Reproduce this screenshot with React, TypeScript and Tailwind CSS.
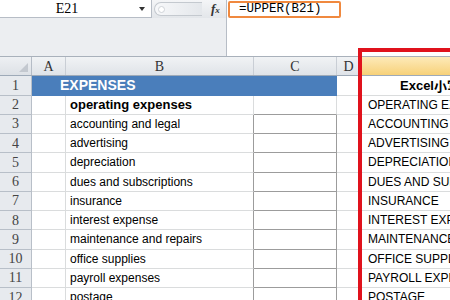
import React from 'react';

type Row = { b: string; e: string; bold?: boolean };

const rows: Row[] = [
  { b: 'operating expenses', e: 'OPERATING EXPENSES', bold: true },
  { b: 'accounting and legal', e: 'ACCOUNTING AND LEGAL' },
  { b: 'advertising', e: 'ADVERTISING' },
  { b: 'depreciation', e: 'DEPRECIATION' },
  { b: 'dues and subscriptions', e: 'DUES AND SUBSCRIPTIONS' },
  { b: 'insurance', e: 'INSURANCE' },
  { b: 'interest expense', e: 'INTEREST EXPENSE' },
  { b: 'maintenance and repairs', e: 'MAINTENANCE AND REPAIRS' },
  { b: 'office supplies', e: 'OFFICE SUPPLIES' },
  { b: 'payroll expenses', e: 'PAYROLL EXPENSES' },
  { b: 'postage', e: 'POSTAGE' },
];

const serif = "font-['Liberation_Serif',serif]";
const sans = "font-['Liberation_Sans',Arial,sans-serif]";

const FormulaBar = () => (
  <div className="flex h-[57px] border-b border-[#a9b1bb]">
    <div className="flex w-[226px] flex-col bg-[#eceef1]">
      <div className="flex h-[18px] items-center bg-gradient-to-b from-[#f4f5f7] to-[#e3e6ea]">
        <div className="flex h-[18px] w-[152px] items-center border-b border-r border-[#b7bdc6] bg-white">
          <span className={`${serif} w-[134px] text-center text-[14px] text-black`}>E21</span>
          <span className="ml-[5px] h-0 w-0 border-x-[3px] border-t-[4px] border-x-transparent border-t-[#333]" />
        </div>
        <div className="ml-[2px] flex h-[14px] w-[48px] items-center rounded-l-full border border-r-0 border-[#c4c9cf] bg-gradient-to-r from-[#f7f8fa] to-[#e4e7eb] pl-[3px]">
          <span className="h-[7px] w-[7px] rounded-full border border-[#cfd3d8] bg-white" />
        </div>
        <span className={`${serif} ml-[9px] text-[13px] font-bold italic text-[#333]`}>
          f<span className="text-[9px]">x</span>
        </span>
      </div>
    </div>
    <div className="flex-1 border-l border-[#b7bdc6] bg-white pt-[1px] pl-[1px]">
      <div className="flex h-[17px] w-[113px] items-center rounded-[2px] border-2 border-[#f0893f] pl-[9px]">
        <span className="font-['Liberation_Mono',monospace] text-[12.5px] leading-none text-black">=UPPER(B21)</span>
      </div>
    </div>
  </div>
);

const HeaderRow = () => (
  <div className={`${serif} flex h-[19.25px] border-b border-[#9eaab8] text-[14px] text-[#333]`}>
    <div className="flex w-[32px] items-end justify-end border-r border-[#b5bcc6] bg-gradient-to-b from-[#eef0f3] to-[#dde1e6] pr-[3px] pb-[3px]">
      <svg width="9" height="9" viewBox="0 0 9 9">
        <polygon points="9,0 9,9 0,9" fill="#c3c8cf" />
      </svg>
    </div>
    {[
      ['A', 'w-[34px]'],
      ['B', 'w-[188px]'],
      ['C', 'w-[83px]'],
      ['D', 'w-[24px]'],
    ].map(([l, w]) => (
      <div key={l} className={`${w} flex items-center justify-center border-r border-[#c9ced5] bg-gradient-to-b from-[#f1f3f5] to-[#dfe3e8]`}>
        {l}
      </div>
    ))}
    <div className="flex-1 bg-gradient-to-b from-[#fdeab8] to-[#f7d178]" />
  </div>
);

const RowNum = ({ n }: { n: number }) => (
  <div className={`${serif} flex w-[32px] items-center justify-center border-r border-b border-[#b8bfc8] bg-[#e7eaee] text-[14px] text-[#444]`}>
    {n}
  </div>
);

export default function App() {
  return (
    <div className="relative h-[300px] w-[450px] overflow-hidden bg-white">
      <FormulaBar />
      <HeaderRow />

      <div className={`${sans} flex h-[19.25px] text-[12px] text-black`}>
        <RowNum n={1} />
        <div className="flex w-[305px] items-center bg-[#4a7ebb] pl-[28px] text-[14px] font-bold text-white">EXPENSES</div>
        <div className="w-[24px] border-r border-b border-[#dadcdd]" />
        <div className="flex flex-1 items-center overflow-hidden border-b border-[#dadcdd] pl-[39px] text-[13px] font-bold whitespace-nowrap">
          Excel<span className="font-['Noto_Sans_CJK_SC',sans-serif] font-bold">小写转大写</span>
        </div>
      </div>

      {rows.map((r, i) => {
        const n = i + 2;
        const boxed = n >= 3;
        return (
          <div key={n} className={`${sans} flex h-[19.25px] text-[12px] text-black`}>
            <RowNum n={n} />
            <div className="w-[34px] border-r border-b border-[#dadcdd]" />
            <div
              className={`flex w-[188px] items-center border-b border-[#dadcdd] pl-[4px] whitespace-nowrap ${
                r.bold ? 'text-[13px] font-bold' : ''
              } ${boxed ? 'border-r border-r-[#9c9c9c]' : 'border-r'}`}
            >
              {r.b}
            </div>
            <div className={`w-[83px] border-b border-[#9c9c9c] ${boxed ? 'border-r border-r-[#9c9c9c]' : 'border-r border-r-[#dadcdd]'}`} />
            <div className="w-[24px] border-r border-b border-[#dadcdd]" />
            <div className="flex flex-1 items-center overflow-hidden border-b border-[#dadcdd] pl-[7px] whitespace-nowrap">{r.e}</div>
          </div>
        );
      })}

      <div className="pointer-events-none absolute top-[48px] left-[358px] h-[270px] w-[110px] border-4 border-[#e0121c]" />
    </div>
  );
}
